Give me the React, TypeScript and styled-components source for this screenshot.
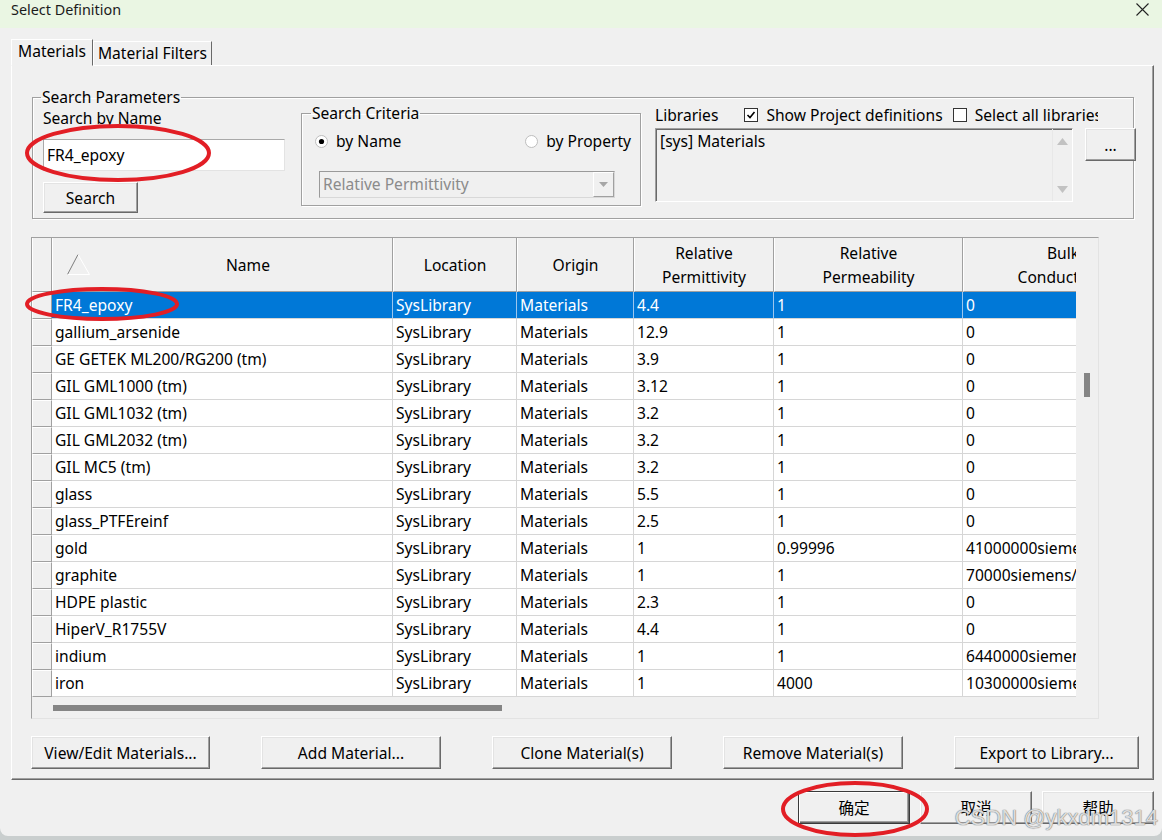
import React from "react";
import styled, { createGlobalStyle } from "styled-components";

const GlobalStyle = createGlobalStyle`
  * { box-sizing: border-box; }
  html, body { margin: 0; padding: 0; }
  body {
    width: 1162px;
    height: 840px;
    overflow: hidden;
    background: #c9cece;
    font-family: "Noto Sans", "Noto Sans CJK SC", sans-serif;
    font-size: 15.6px;
    color: #000;
  }
`;

const Root = styled.div`
  position: relative;
  width: 1162px;
  height: 840px;
`;

const Window = styled.div`
  width: 1162px;
  height: 836px;
  background: #f0f0f0;
  border-radius: 0 0 8px 8px;
  display: flex;
  flex-direction: column;
`;

const TitleBar = styled.div`
  height: 28px;
  flex: none;
  background: #eaf6e3;
  display: flex;
  justify-content: space-between;
  align-items: flex-start;
  padding: 0 13px 0 11px;
`;

const Title = styled.span`
  font-size: 14.4px;
  line-height: 20px;
  color: #1b1b1b;
`;

const CloseIcon = styled.svg`
  margin-top: 3px;
`;

const Body = styled.div`
  padding: 11px 0 0 11px;
`;

const TabStrip = styled.div`
  display: flex;
  align-items: flex-end;
  height: 27px;
  margin-bottom: -1px;
  position: relative;
  z-index: 1;
`;

const Tab = styled.div<{ $active?: boolean; $w: number }>`
  width: ${(p) => p.$w}px;
  height: ${(p) => (p.$active ? 27 : 24)}px;
  margin-bottom: ${(p) => (p.$active ? 0 : 1)}px;
  background: #f0f0f0;
  border: 1px solid;
  border-color: #fff #696969 ${(p) => (p.$active ? "#f0f0f0" : "transparent")} #fff;
  border-bottom-width: ${(p) => (p.$active ? 1 : 0)}px;
  text-align: center;
  line-height: 22px;
  white-space: nowrap;
`;

const Panel = styled.div`
  width: 1143px;
  border: 1px solid;
  border-color: #fff #696969 #696969 #fff;
  box-shadow: inset -1px -1px 0 #a0a0a0;
  padding: 23px 0 10px 19px;
  display: flex;
  flex-direction: column;
`;

const GroupBox = styled.fieldset<{ $w: number; $ml: number }>`
  margin: 0 0 0 ${(p) => p.$ml}px;
  padding: 0;
  width: ${(p) => p.$w}px;
  min-width: 0;
  border: 1px solid #a0a0a0;
  box-shadow: inset 1px 1px 0 #fff, 1px 1px 0 #fff;
  flex: none;
`;

const GroupLegend = styled.legend<{ $offset: number }>`
  margin-left: ${(p) => p.$offset}px;
  padding: 0 1px;
  line-height: 16px;
`;

const GroupRow = styled.div`
  display: flex;
  align-items: flex-start;
  padding-bottom: 5px;
`;

const LeftCol = styled.div`
  width: 242px;
  margin-left: 10px;
  display: flex;
  flex-direction: column;
  align-items: flex-start;
`;

const FieldLabel = styled.div`
  line-height: 20px;
  margin-top: 3px;
`;

const TextInput = styled.input`
  width: 242px;
  height: 32px;
  margin-top: 11px;
  padding: 0 3px;
  background: #fff;
  border: 1px solid;
  border-color: #a9a9a9 #e3e3e3 #e3e3e3 #a9a9a9;
  font: inherit;
  color: #000;
  outline: none;
`;

const WinButton = styled.button<{ $w: number; $h?: number; $default?: boolean }>`
  width: ${(p) => p.$w}px;
  height: ${(p) => p.$h ?? 33}px;
  flex: none;
  padding: 0;
  background: #f0f0f0;
  font: inherit;
  color: #000;
  border: 1px solid;
  border-color: ${(p) =>
    p.$default ? "#3a3a3a" : "#ffffff #696969 #696969 #ffffff"};
  box-shadow: ${(p) =>
    p.$default
      ? "inset 1px 1px 0 #fff, inset -1px -1px 0 #696969, inset -2px -2px 0 #a0a0a0"
      : "inset -1px -1px 0 #a0a0a0, inset 1px 1px 0 #e3e3e3"};
  white-space: nowrap;
`;

const SearchButton = styled(WinButton)`
  margin-top: 11px;
`;

const CriteriaBody = styled.div`
  padding-bottom: 7px;
`;

const RadioRow = styled.div`
  display: flex;
  justify-content: space-between;
  margin: 10px 9px 0 13px;
  line-height: 20px;
`;

const RadioItem = styled.label`
  display: flex;
  align-items: center;
  gap: 8px;
`;

const SelectBox = styled.div`
  margin: 20px 0 0 17px;
  width: 296px;
  height: 27px;
  display: flex;
  background: #f0f0f0;
  border: 1px solid;
  border-color: #9a9a9a #d8d8d8 #d8d8d8 #9a9a9a;
  color: #8b8b8b;
`;

const SelectText = styled.span`
  flex: 1;
  padding-left: 3px;
  line-height: 24px;
`;

const SelectArrow = styled.span`
  width: 21px;
  display: flex;
  align-items: center;
  justify-content: center;
  border: 1px solid;
  border-color: #fff #a0a0a0 #a0a0a0 #fff;
`;

const LibCol = styled.div`
  margin-left: 14px;
  display: flex;
  flex-direction: column;
`;

const LibHeader = styled.div`
  width: 443px;
  height: 20px;
  display: flex;
  align-items: center;
  overflow: hidden;
  white-space: nowrap;
  line-height: 20px;
`;

const CheckItem = styled.label<{ $ml: number }>`
  display: flex;
  align-items: center;
  gap: 8px;
  margin-left: ${(p) => p.$ml}px;
  flex: none;
`;

const CheckBox = styled.span`
  width: 14px;
  height: 14px;
  flex: none;
  display: flex;
  align-items: center;
  justify-content: center;
  background: #fff;
  border: 1px solid #333;
`;

const LibRow = styled.div`
  display: flex;
  align-items: flex-start;
  margin-top: 3px;
`;

const ListBox = styled.div`
  width: 418px;
  height: 74px;
  display: flex;
  background: #f0f0f0;
  border: 1px solid;
  border-color: #a0a0a0 #fff #fff #a0a0a0;
  box-shadow: inset 1px 1px 0 #696969;
`;

const ListText = styled.div`
  flex: 1;
  padding: 2px 4px;
  line-height: 20px;
`;

const ListScroll = styled.div`
  width: 20px;
  display: flex;
  flex-direction: column;
  justify-content: space-between;
  align-items: center;
  padding: 9px 0 8px;
  border-left: 1px solid #e8e8e8;
`;

const DotsButton = styled(WinButton)`
  margin-left: 12px;
`;

const TableFrame = styled.div`
  margin-top: 18px;
  width: 1068px;
  height: 482px;
  border: 1px solid;
  border-color: #a0a0a0 #e3e3e3 #e3e3e3 #a0a0a0;
  display: grid;
  grid-template-columns: 1044px 22px;
  grid-template-rows: 459px 21px;
  background: #f0f0f0;
`;

const DataArea = styled.div`
  overflow: hidden;
  background: #fff;
`;

const HeaderRow = styled.div`
  display: flex;
  width: max-content;
  height: 54px;
  background: #f0f0f0;
`;

const HeadCell = styled.div<{ $w: number }>`
  width: ${(p) => p.$w}px;
  flex: none;
  height: 54px;
  border-left: 1px solid #fff;
  border-right: 1px solid #a0a0a0;
  border-bottom: 1px solid #a0a0a0;
  display: flex;
  flex-direction: column;
  align-items: center;
  justify-content: center;
  line-height: 24px;
  white-space: nowrap;
`;

const NameHead = styled(HeadCell)`
  flex-direction: row;
  justify-content: flex-start;
  padding-left: 14px;
`;

const NameHeadText = styled.span`
  flex: 1;
  text-align: center;
  padding-left: 14px;
`;

const Row = styled.div`
  display: flex;
  width: max-content;
  height: 27px;
`;

const RowHead = styled.div`
  width: 20px;
  flex: none;
  background: #f0f0f0;
  border-left: 1px solid #fff;
  border-top: 1px solid #fff;
  border-right: 1px solid #a0a0a0;
  border-bottom: 1px solid #a0a0a0;
`;

const Cell = styled.div<{ $w: number; $sel?: boolean }>`
  width: ${(p) => p.$w}px;
  flex: none;
  padding-left: 3px;
  line-height: 26px;
  white-space: nowrap;
  overflow: hidden;
  background: ${(p) => (p.$sel ? "#0078d7" : "#fff")};
  color: ${(p) => (p.$sel ? "#fff" : "#000")};
  border-right: 1px solid ${(p) => (p.$sel ? "#9cc6ee" : "#d6d6d6")};
  border-bottom: 1px solid #d6d6d6;
`;

const VScroll = styled.div`
  grid-row: 1 / span 2;
  grid-column: 2;
  background: #f0f0f0;
  padding: 135px 0 0 8px;
`;

const HScroll = styled.div`
  background: #f0f0f0;
  padding: 8px 0 0 21px;
`;

const Thumb = styled.div<{ $w: number; $h: number }>`
  width: ${(p) => p.$w}px;
  height: ${(p) => p.$h}px;
  background: #858585;
`;

const ActionRow = styled.div`
  margin-top: 17px;
  width: 1108px;
  display: flex;
  justify-content: space-between;
`;

const DialogButtons = styled.div`
  margin-top: 11px;
  display: flex;
  justify-content: flex-end;
  gap: 10px;
  padding-right: 8px;
`;

const Annotations = styled.svg`
  position: absolute;
  top: 0;
  left: 0;
  pointer-events: none;
`;

const Watermark = styled.span`
  position: absolute;
  top: 804px;
  right: 4px;
  font-family: "Liberation Sans", Arial, sans-serif;
  font-size: 22px;
  line-height: 28px;
  color: rgba(255, 255, 255, 0.75);
  text-shadow: 0 0 1px #6f6f6f, 0 0 1px #6f6f6f;
  pointer-events: none;
`;

const columns = [
  { key: "name", label: ["Name"], w: 341 },
  { key: "loc", label: ["Location"], w: 124 },
  { key: "origin", label: ["Origin"], w: 117 },
  { key: "perm", label: ["Relative", "Permittivity"], w: 140 },
  { key: "mu", label: ["Relative", "Permeability"], w: 189 },
  { key: "bulk", label: ["Bulk", "Conductivity"], w: 200 },
];

const rows = [
  ["FR4_epoxy", "4.4", "1", "0"],
  ["gallium_arsenide", "12.9", "1", "0"],
  ["GE GETEK ML200/RG200 (tm)", "3.9", "1", "0"],
  ["GIL GML1000 (tm)", "3.12", "1", "0"],
  ["GIL GML1032 (tm)", "3.2", "1", "0"],
  ["GIL GML2032 (tm)", "3.2", "1", "0"],
  ["GIL MC5 (tm)", "3.2", "1", "0"],
  ["glass", "5.5", "1", "0"],
  ["glass_PTFEreinf", "2.5", "1", "0"],
  ["gold", "1", "0.99996", "41000000siemens/m"],
  ["graphite", "1", "1", "70000siemens/m"],
  ["HDPE plastic", "2.3", "1", "0"],
  ["HiperV_R1755V", "4.4", "1", "0"],
  ["indium", "1", "1", "6440000siemens/m"],
  ["iron", "1", "4000", "10300000siemens/m"],
];

const Radio = ({ on }: { on: boolean }) => (
  <svg width="13" height="13" viewBox="0 0 13 13">
    <circle cx="6.5" cy="6.5" r="6" fill="#fff" stroke="#bdbdbd" />
    {on && <circle cx="6.5" cy="6.5" r="2.6" fill="#000" />}
  </svg>
);

const Check = ({ on }: { on: boolean }) => (
  <CheckBox>
    {on && (
      <svg width="10" height="10" viewBox="0 0 10 10">
        <path d="M1.5 5 L4 7.5 L8.5 2" fill="none" stroke="#000" strokeWidth="1.6" />
      </svg>
    )}
  </CheckBox>
);

const SortTriangle = () => (
  <svg width="23" height="21" viewBox="0 0 23 21">
    <path d="M11 0.5 L0.5 20.5" stroke="#7d7d7d" strokeWidth="1" />
    <path d="M11 0.5 L22.5 20.5 L0.5 20.5" fill="none" stroke="#ffffff" strokeWidth="1" />
  </svg>
);

const App = () => {
  return (
    <Root>
      <GlobalStyle />
      <Window>
        <TitleBar>
          <Title>Select Definition</Title>
          <CloseIcon width="13" height="13" viewBox="0 0 13 13">
            <path d="M0.5 0.5 L12.5 12.5 M12.5 0.5 L0.5 12.5" stroke="#222" strokeWidth="1.1" />
          </CloseIcon>
        </TitleBar>
        <Body>
          <TabStrip>
            <Tab $active $w={82}>Materials</Tab>
            <Tab $w={119}>Material Filters</Tab>
          </TabStrip>
          <Panel>
            <GroupBox $w={1102} $ml={1}>
              <GroupLegend $offset={8}>Search Parameters</GroupLegend>
              <GroupRow>
                <LeftCol>
                  <FieldLabel>Search by Name</FieldLabel>
                  <TextInput defaultValue="FR4_epoxy" readOnly />
                  <SearchButton $w={95} $h={31}>Search</SearchButton>
                </LeftCol>
                <GroupBox $w={340} $ml={16}>
                  <GroupLegend $offset={9}>Search Criteria</GroupLegend>
                  <CriteriaBody>
                    <RadioRow>
                      <RadioItem>
                        <Radio on />
                        by Name
                      </RadioItem>
                      <RadioItem>
                        <Radio on={false} />
                        by Property
                      </RadioItem>
                    </RadioRow>
                    <SelectBox>
                      <SelectText>Relative Permittivity</SelectText>
                      <SelectArrow>
                        <svg width="9" height="5" viewBox="0 0 9 5">
                          <path d="M0 0 H9 L4.5 5 Z" fill="#a6a6a6" />
                        </svg>
                      </SelectArrow>
                    </SelectBox>
                  </CriteriaBody>
                </GroupBox>
                <LibCol>
                  <LibHeader>
                    <span>Libraries</span>
                    <CheckItem $ml={26}>
                      <Check on />
                      Show Project definitions
                    </CheckItem>
                    <CheckItem $ml={10}>
                      <Check on={false} />
                      Select all libraries
                    </CheckItem>
                  </LibHeader>
                  <LibRow>
                    <ListBox>
                      <ListText>[sys] Materials</ListText>
                      <ListScroll>
                        <svg width="11" height="7" viewBox="0 0 11 7">
                          <path d="M0 7 L5.5 0 L11 7 Z" fill="#c2c2c2" />
                        </svg>
                        <svg width="11" height="7" viewBox="0 0 11 7">
                          <path d="M0 0 L11 0 L5.5 7 Z" fill="#c2c2c2" />
                        </svg>
                      </ListScroll>
                    </ListBox>
                    <DotsButton $w={51}>...</DotsButton>
                  </LibRow>
                </LibCol>
              </GroupRow>
            </GroupBox>

            <TableFrame>
              <DataArea>
                <HeaderRow>
                  <HeadCell $w={20} />
                  {columns.map((c) =>
                    c.key === "name" ? (
                      <NameHead key={c.key} $w={c.w}>
                        <SortTriangle />
                        <NameHeadText>{c.label[0]}</NameHeadText>
                      </NameHead>
                    ) : (
                      <HeadCell key={c.key} $w={c.w}>
                        {c.label.map((l) => (
                          <span key={l}>{l}</span>
                        ))}
                      </HeadCell>
                    )
                  )}
                </HeaderRow>
                {rows.map((r, i) => {
                  const sel = i === 0;
                  const values = [r[0], "SysLibrary", "Materials", r[1], r[2], r[3]];
                  return (
                    <Row key={r[0]}>
                      <RowHead />
                      {values.map((v, j) => (
                        <Cell key={j} $w={columns[j].w} $sel={sel}>
                          {v}
                        </Cell>
                      ))}
                    </Row>
                  );
                })}
              </DataArea>
              <VScroll>
                <Thumb $w={6} $h={24} />
              </VScroll>
              <HScroll>
                <Thumb $w={449} $h={6} />
              </HScroll>
            </TableFrame>

            <ActionRow>
              <WinButton $w={179}>View/Edit Materials...</WinButton>
              <WinButton $w={180}>Add Material...</WinButton>
              <WinButton $w={180}>Clone Material(s)</WinButton>
              <WinButton $w={180}>Remove Material(s)</WinButton>
              <WinButton $w={185}>Export to Library...</WinButton>
            </ActionRow>
          </Panel>
        </Body>
        <DialogButtons>
          <WinButton $w={112} $default>确定</WinButton>
          <WinButton $w={112}>取消</WinButton>
          <WinButton $w={112}>帮助</WinButton>
        </DialogButtons>
      </Window>

      <Annotations width="1162" height="840" viewBox="0 0 1162 840">
        <ellipse cx="118" cy="153" rx="91" ry="27" fill="none" stroke="#e21e25" strokeWidth="4" />
        <ellipse cx="102" cy="304" rx="75" ry="15" fill="none" stroke="#e21e25" strokeWidth="4" />
        <ellipse cx="855" cy="809" rx="72" ry="26" fill="none" stroke="#e21e25" strokeWidth="4" />
      </Annotations>
      <Watermark>CSDN @ykxdm1314</Watermark>
    </Root>
  );
};

export default App;
